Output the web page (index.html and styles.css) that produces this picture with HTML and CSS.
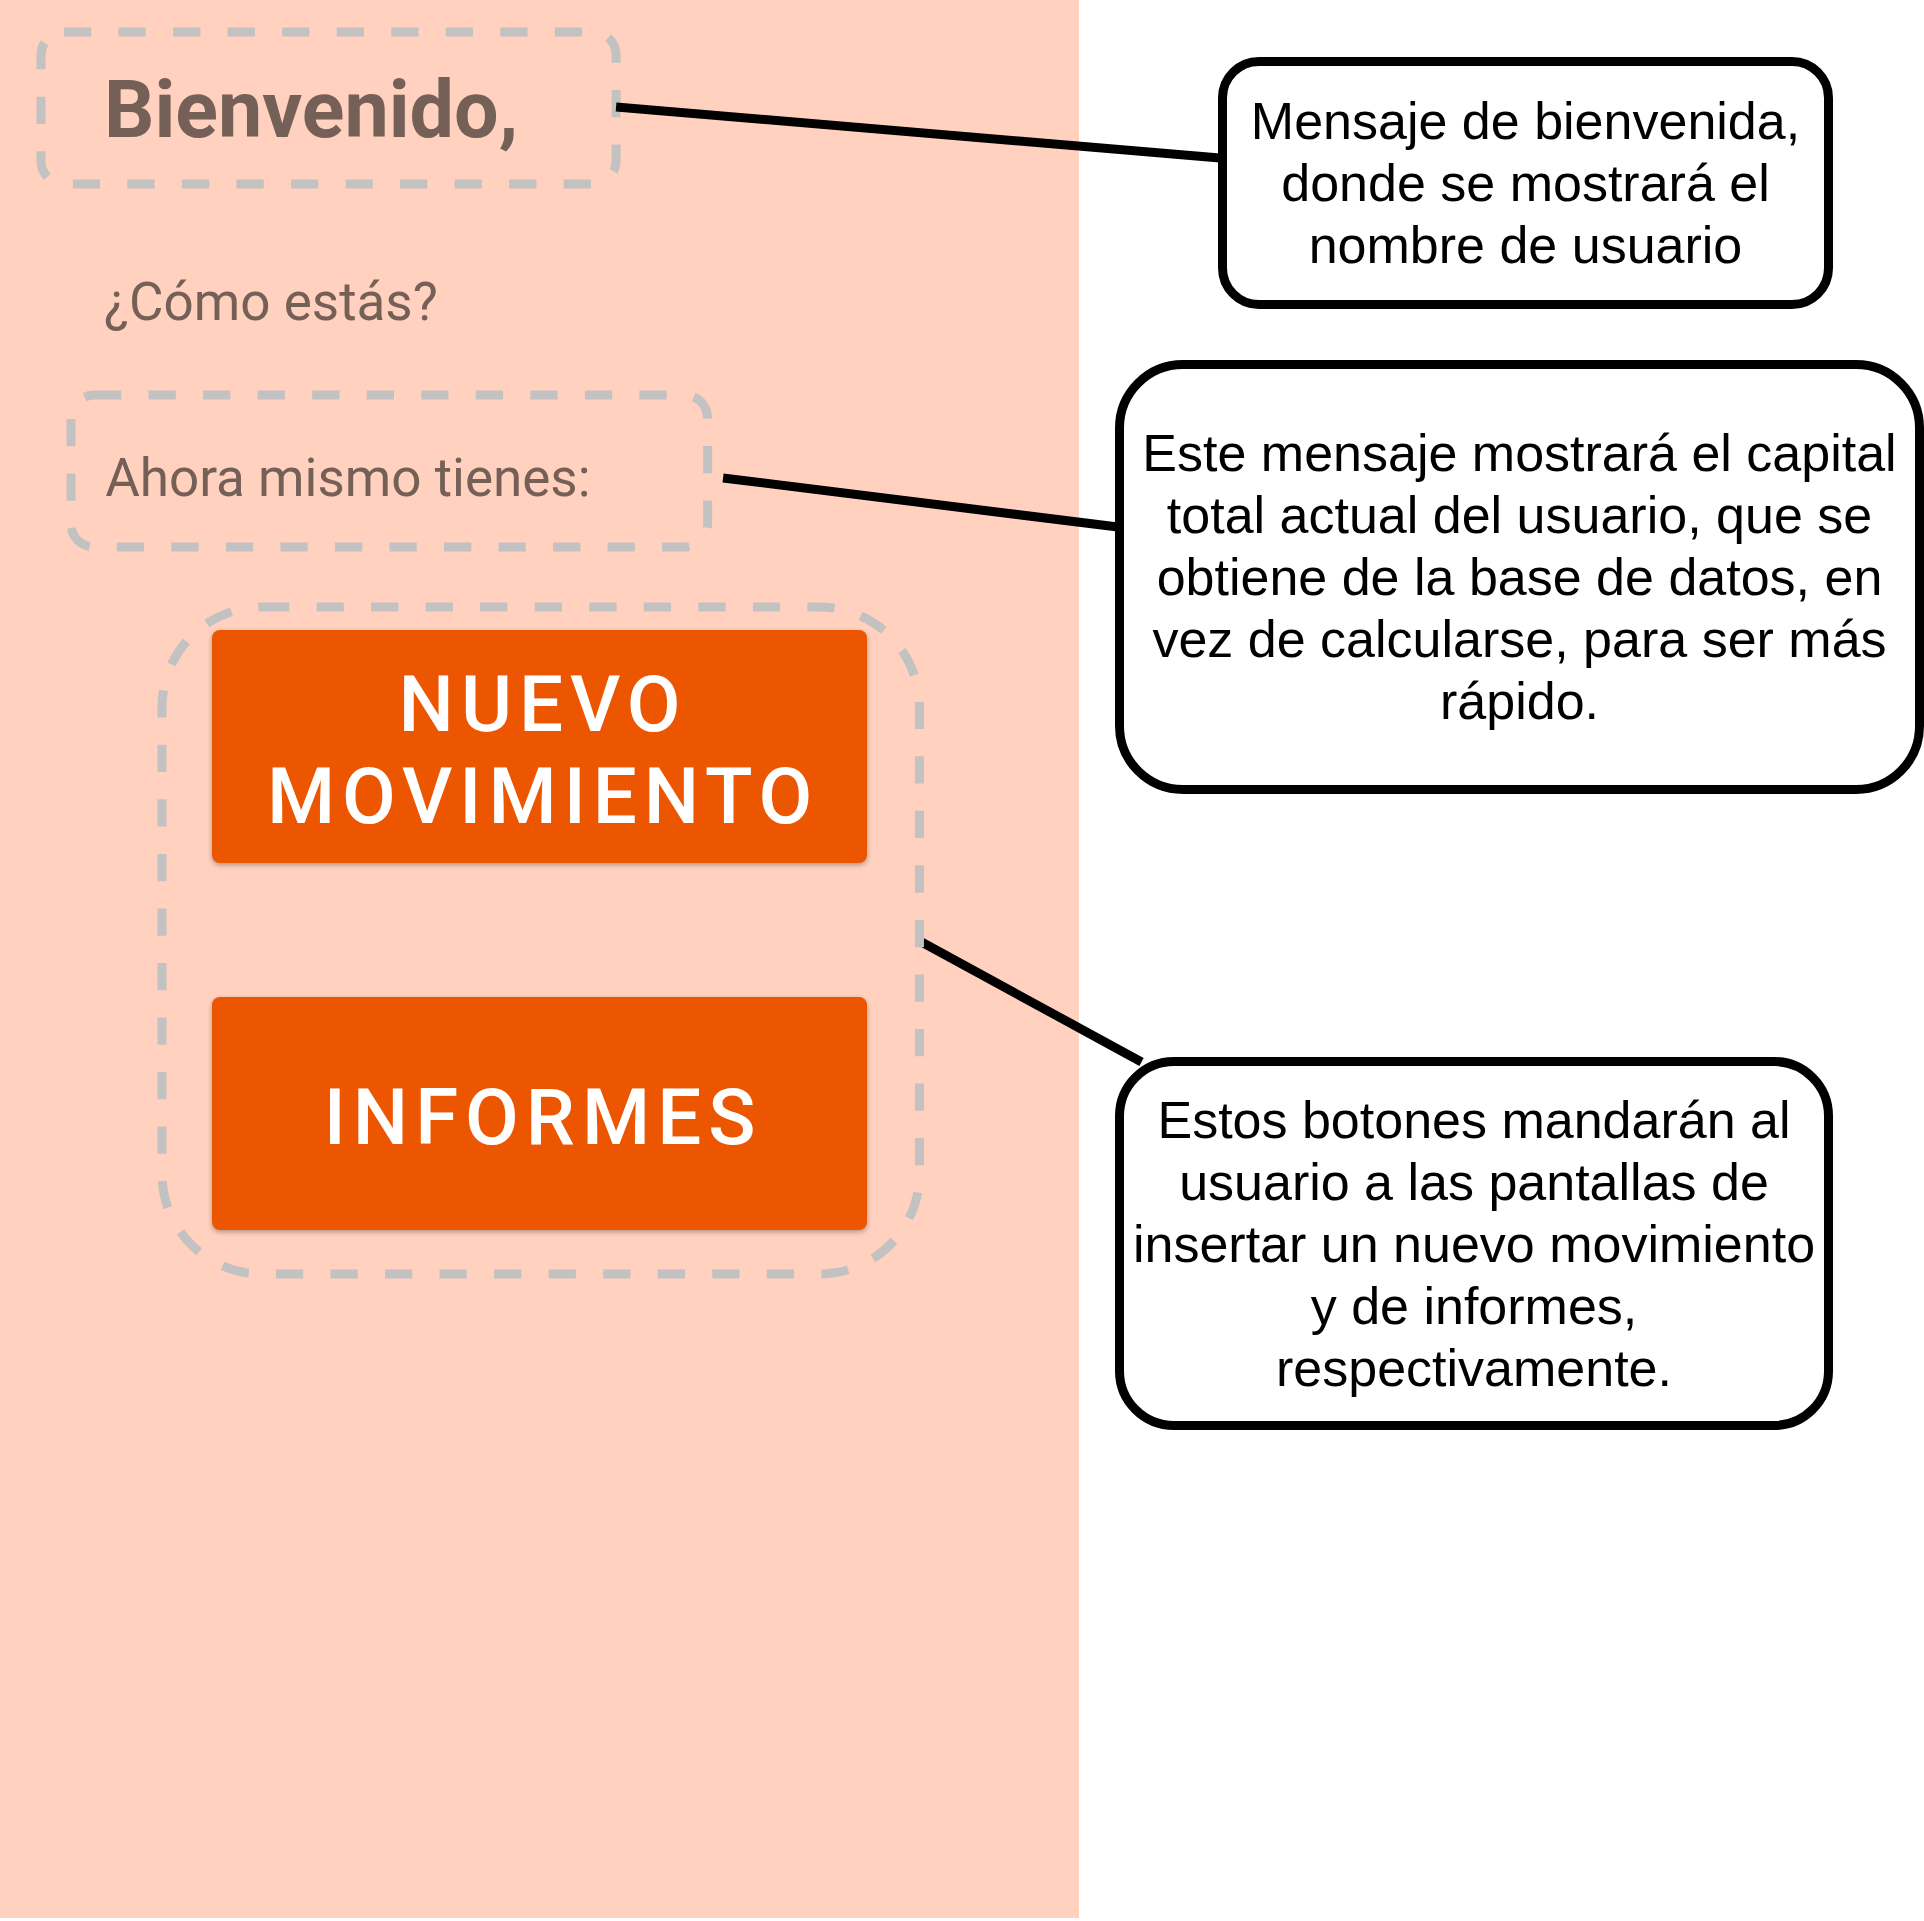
FILE: index.html
```html
<!DOCTYPE html>
<html lang="es">
<head>
<meta charset="utf-8">
<meta name="viewport" content="width=device-width, initial-scale=1">
<title>Pantalla de bienvenida</title>
<link rel="stylesheet" href="styles.css">
</head>
<body>
<div class="diagram">
  <main class="screen">
    <div class="outlined welcome">
      <svg class="outline" aria-hidden="true"><rect width="100%" height="100%" rx="23"/></svg>
      <h1 class="welcome-title">Bienvenido,</h1>
    </div>
    <p class="text greeting">¿Cómo estás?</p>
    <div class="outlined balance">
      <svg class="outline" aria-hidden="true"><rect width="100%" height="100%" rx="23"/></svg>
      <p class="text">Ahora mismo tienes:</p>
    </div>
    <div class="outlined actions">
      <svg class="outline" aria-hidden="true"><rect width="100%" height="100%" rx="100"/></svg>
      <button class="action" type="button">NUEVO MOVIMIENTO</button>
      <button class="action" type="button">INFORMES</button>
    </div>
  </main>
  <aside class="notes">
    <p class="note note-welcome">Mensaje de bienvenida, donde se mostrará el nombre de usuario</p>
    <p class="note note-balance">Este mensaje mostrará el capital total actual del usuario, que se obtiene de la base de datos, en vez de calcularse, para ser más rápido.</p>
    <p class="note note-actions">Estos botones mandarán al usuario a las pantallas de insertar un nuevo movimiento y de informes, respectivamente.</p>
  </aside>
  <svg class="connectors" aria-hidden="true">
    <line x1="32.02%" y1="107" x2="63.4%" y2="158"/>
    <line x1="37.58%" y1="478" x2="58.1%" y2="527"/>
    <line x1="47.8%" y1="941" x2="59.33%" y2="1062"/>
  </svg>
</div>
</body>
</html>
```
FILE: styles.css
```css
* {
  box-sizing: border-box;
}

body {
  margin: 0;
  background: #fff;
}

p,
h1 {
  margin: 0;
}

.diagram {
  position: relative;
  display: grid;
  grid-template-columns: 1079fr 845fr;
  min-height: 100vh;
  padding-bottom: 3px;
}

/* App screen */
.screen {
  padding-top: 32px;
  background: #ffd1be;
  font-family: Roboto, "Liberation Sans", sans-serif;
  color: #756057;
}

.outlined {
  position: relative;
}

.outline {
  position: absolute;
  inset: 0;
  width: 100%;
  height: 100%;
  overflow: visible;
  fill: none;
  stroke: #c2c2c2;
  stroke-width: 9;
  stroke-dasharray: 27.27 27.27;
}

.welcome {
  width: 53.3%;
  margin-left: 3.8%;
  padding: 32px 0 28px 63px;
}

.welcome-title {
  font-size: 79px;
  font-weight: 700;
  line-height: 92px;
}

.text {
  font-size: 53px;
  line-height: 64px;
}

.greeting {
  margin: 86px 0 61px 104px;
}

.balance {
  width: 59%;
  margin-left: 6.6%;
  padding: 51px 0 37px 34px;
}

.actions {
  z-index: 2;
  display: flex;
  flex-direction: column;
  gap: 134px;
  width: 70.2%;
  margin: 60px 0 0 15%;
  padding: 23px 52px 44px 50px;
}

.action {
  min-height: 233px;
  padding: 8px 0 0 7px;
  border: 0;
  border-radius: 8px;
  background: #ed5600;
  box-shadow: 0 2px 5px rgba(0, 0, 0, 0.3);
  color: #fff;
  font-family: inherit;
  font-size: 78px;
  font-weight: 500;
  line-height: 92px;
  letter-spacing: 7px;
}

/* Explanatory notes */
.notes {
  display: flex;
  flex-direction: column;
  padding: 57px 0 0 36px;
}

.note {
  z-index: 3;
  display: grid;
  place-items: center;
  border: 9px solid #000;
  background: #fff;
  color: #000;
  font-family: "Liberation Sans", Arial, sans-serif;
  font-size: 52px;
  line-height: 62px;
  text-align: center;
}

.note-welcome {
  min-height: 252px;
  margin: 0 91px 51px 103px;
  border-radius: 41px;
}

.note-balance {
  min-height: 434px;
  margin-bottom: 263px;
  padding: 0 10px;
  border-radius: 68px;
}

.note-actions {
  min-height: 373px;
  margin-right: 91px;
  border-radius: 59px;
}

.connectors {
  position: absolute;
  inset: 0;
  z-index: 1;
  width: 100%;
  height: 100%;
  pointer-events: none;
  stroke: #000;
  stroke-width: 9;
}
```
